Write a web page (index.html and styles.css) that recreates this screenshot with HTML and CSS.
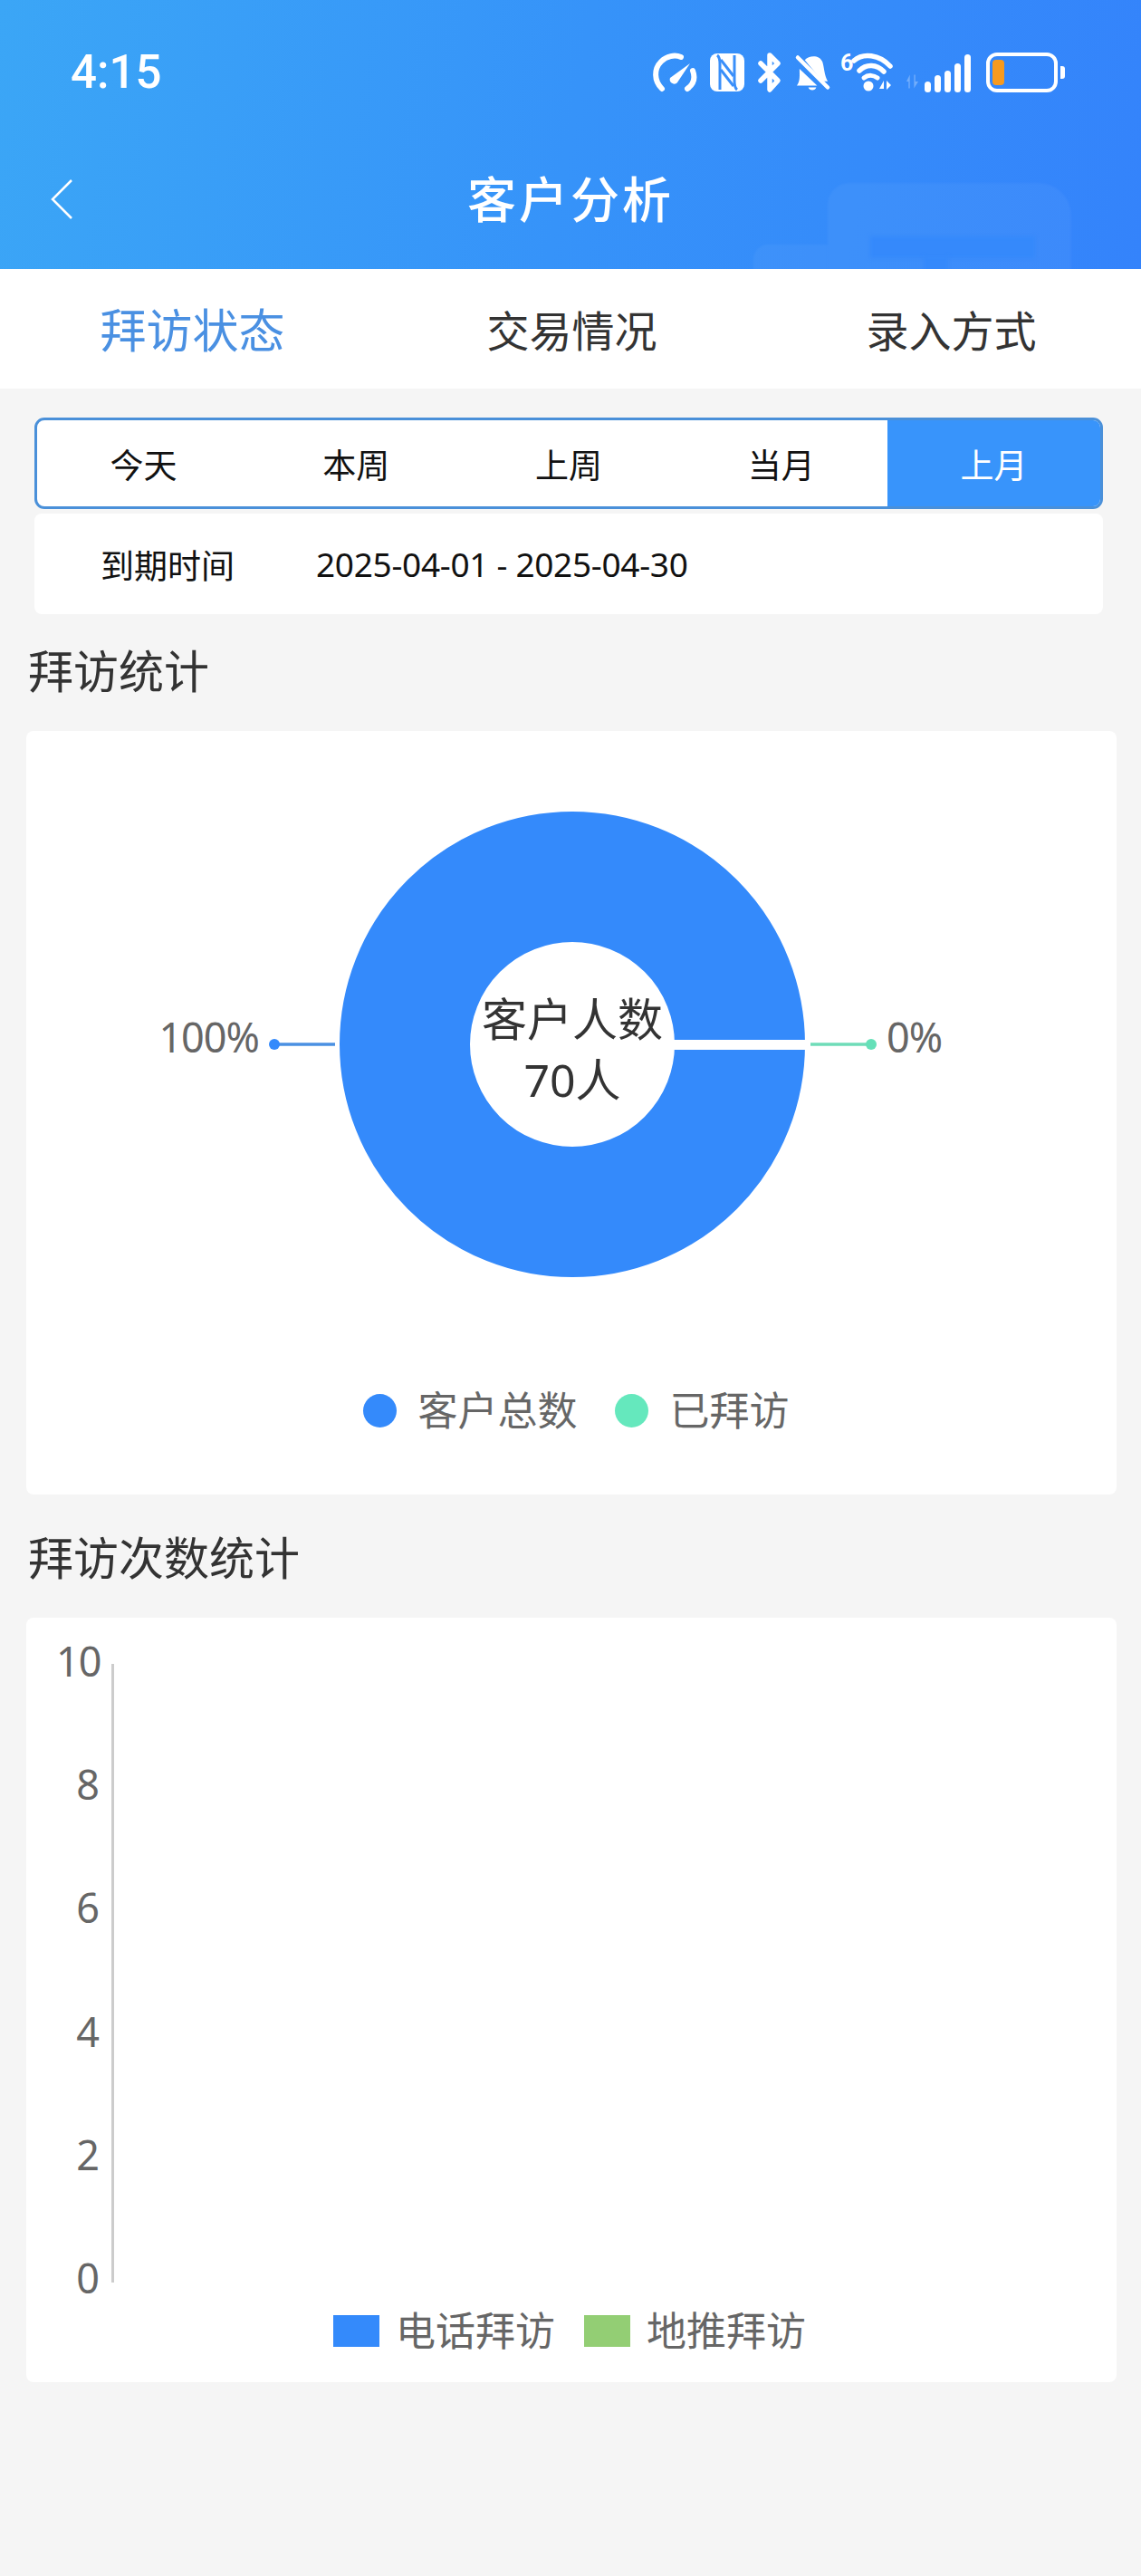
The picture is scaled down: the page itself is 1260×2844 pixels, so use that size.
FILE: index.html
```html
<!DOCTYPE html>
<html lang="zh-CN">
<head>
  <meta charset="UTF-8" />
  <meta name="viewport" content="width=device-width, initial-scale=1.0"/>
  <title>客户分析</title>
  <link rel="stylesheet" href="styles.css">
</head>
<body>
  <header class="top">
    <div class="deco deco-a"></div>
    <div class="deco deco-b"></div>
    <div class="deco-cut deco-cut-a"></div>
    <div class="deco-cut deco-cut-b"></div>

    <div class="status">
      <span class="time">4:15</span>
      <div class="status-icons">
        <svg class="ic" width="48" height="44" viewBox="0 0 48 44">
          <path d="M10 40 C1 31 1 18 9 10 C15 4 24 2 31 5" fill="none" stroke="#fff" stroke-width="6" stroke-linecap="round"/>
          <path d="M44 20 C47 28 45 35 38 40" fill="none" stroke="#fff" stroke-width="6" stroke-linecap="round"/>
          <path d="M41 12 L27 33 C24 37 17 33 19 28 Z" fill="#fff"/>
        </svg>
        <svg class="ic" width="38" height="42" viewBox="0 0 38 42">
          <rect width="38" height="42" rx="8" fill="#fff"/>
          <path d="M8 2 C11 4 11 8 11 12 V40 M30 40 C27 38 27 34 27 30 V2" fill="none" stroke="#3a8ffa" stroke-width="3"/>
          <path d="M12 7 L26 25 M12 18 L26 36" stroke="#3a8ffa" stroke-width="3" fill="none"/>
        </svg>
        <svg class="ic" width="27" height="44" viewBox="0 0 27 44">
          <path d="M3 12 L22 31 L13 41 V3 L22 12 L3 31" fill="none" stroke="#fff" stroke-width="5.5" stroke-linecap="round" stroke-linejoin="round"/>
        </svg>
        <svg class="ic ic-bell" width="37" height="42" viewBox="0 0 38 42">
          <path d="M10 7 C15 1 27 1 30 9 C32 15 32 24 36 31 L30 31 Z M4 17 L24 36 H1 C5 31 4 24 4 17 Z M14 38 H23 C22 42 15 42 14 38 Z" fill="#fff"/>
          <path d="M2 4 L36 38" stroke="#fff" stroke-width="4.5" stroke-linecap="round"/>
        </svg>
        <svg class="ic ic-wifi" width="56" height="44" viewBox="0 0 56 44">
          <text x="-1" y="20" class="wifi-six">6</text>
          <path d="M14 9 C24 0 42 2 54 15" fill="none" stroke="#fff" stroke-width="5.5" stroke-linecap="round"/>
          <path d="M20 20 C28 12 39 13 47 21" fill="none" stroke="#fff" stroke-width="5.5" stroke-linecap="round"/>
          <path d="M25 28 C30 24 36 25 40 28" fill="none" stroke="#fff" stroke-width="5" stroke-linecap="round"/>
          <circle cx="30" cy="37" r="5.5" fill="#fff"/>
          <path d="M42 40 H47 V31 Z M50 31 V41 L55 36 Z" fill="#fff"/>
        </svg>
        <svg class="ic ic-arrows" width="13" height="16" viewBox="0 0 14 16">
          <path d="M0 8 L4 0 V16 H2.5 V8 Z M9 0 H10.5 V8 H14 L9 16 Z" fill="#fff" opacity="0.3"/>
        </svg>
        <div class="bars">
          <i style="height:12px"></i><i style="height:19px"></i><i style="height:24px"></i><i style="height:32px"></i><i style="height:42px"></i>
        </div>
        <div class="battery">
          <div class="battery-body"><div class="battery-fill"></div></div>
          <div class="battery-tip"></div>
        </div>
      </div>
    </div>

    <div class="nav">
      <svg class="back" width="26" height="46" viewBox="0 0 26 46">
        <path d="M24 2 L3 23 L24 44" fill="none" stroke="#fff" stroke-width="2.5"/>
      </svg>
      <h1>客户分析</h1>
    </div>
  </header>

  <div class="tabs">
    <div class="tab active">拜访状态</div>
    <div class="tab">交易情况</div>
    <div class="tab">录入方式</div>
  </div>

  <div class="range">
    <div class="seg">
      <div class="seg-item">今天</div>
      <div class="seg-item">本周</div>
      <div class="seg-item">上周</div>
      <div class="seg-item">当月</div>
      <div class="seg-item on">上月</div>
    </div>
    <div class="date-row">
      <span class="date-label">到期时间</span>
      <span class="date-val">2025-04-01 - 2025-04-30</span>
    </div>
  </div>

  <h2 class="sec first">拜访统计</h2>
  <section class="card pie-card">
    <svg class="pie" width="1204" height="700" viewBox="0 0 1204 700">
      <circle cx="603" cy="346" r="185" fill="none" stroke="#348afb" stroke-width="144"/>
      <rect x="712" y="341" width="152" height="11" fill="#fff"/>
      <path d="M274 346 H341" stroke="#4a90e2" stroke-width="3.5"/>
      <circle cx="274" cy="346" r="6" fill="#348afb"/>
      <path d="M866 346 H933" stroke="#6fdcb8" stroke-width="3.5"/>
      <circle cx="933" cy="346" r="6" fill="#65e0b8"/>
      <text x="257" y="355" text-anchor="end" class="pie-pct">100%</text>
      <text x="950" y="355" class="pie-pct">0%</text>
      <text x="603" y="337" text-anchor="middle" class="pie-center">客户人数</text>
      <text x="603" y="404" text-anchor="middle" class="pie-center">70人</text>
    </svg>
    <div class="legend">
      <div class="legend-item"><span class="dot dot-blue"></span>客户总数</div>
      <div class="legend-item"><span class="dot dot-green"></span>已拜访</div>
    </div>
  </section>

  <h2 class="sec">拜访次数统计</h2>
  <section class="card bar-card">
    <div class="plot">
      <div class="y-labels">
        <span>10</span><span>8</span><span>6</span><span>4</span><span>2</span><span>0</span>
      </div>
      <div class="y-axis"></div>
    </div>
    <div class="bar-legend">
      <div class="bar-legend-item"><span class="swatch swatch-blue"></span>电话拜访</div>
      <div class="bar-legend-item"><span class="swatch swatch-green"></span>地推拜访</div>
    </div>
  </section>
</body>
</html>
```

FILE: styles.css
```css
* {
  box-sizing: border-box;
}

body {
  margin: 0;
  height: 2844px;
  background-color: #f5f5f5;
  font-family: "Noto Sans", "Noto Sans CJK SC", sans-serif;
  color: #333;
  overflow: hidden;
}

.top {
  position: relative;
  height: 297px;
  padding-top: 58px;
  overflow: hidden;
  background: linear-gradient(100deg, #3ba6f6 0%, #3693f9 50%, #3483fb 100%);
}

/* faint building shapes behind the title */
.deco {
  position: absolute;
  background: rgba(255, 255, 255, 0.045);
  filter: blur(1px);
}

.deco-a {
  left: 914px;
  top: 202px;
  width: 269px;
  height: 130px;
  border-radius: 24px 36px 0 0;
}

.deco-b {
  left: 832px;
  top: 270px;
  width: 82px;
  height: 60px;
  border-radius: 16px 0 0 0;
}

.deco-cut {
  position: absolute;
  background: #3589fb;
  filter: blur(2px);
}

.deco-cut-a {
  left: 961px;
  top: 261px;
  width: 182px;
  height: 24px;
}

.deco-cut-b {
  left: 1020px;
  top: 283px;
  width: 27px;
  height: 20px;
}

.status {
  position: relative;
  display: flex;
  justify-content: space-between;
  align-items: center;
  height: 44px;
  padding: 0 84px 0 78px;
  color: #fff;
}

.time {
  font-family: Roboto, sans-serif;
  font-size: 51px;
  font-weight: 500;
  line-height: 44px;
}

.status-icons {
  display: flex;
  align-items: center;
}

.ic {
  display: block;
  margin-right: 15px;
  overflow: visible;
}

.ic-bell {
  margin-right: 13px;
}

.ic-wifi {
  margin-right: 16px;
}

.ic-arrows {
  align-self: flex-end;
  margin: 0 7px 4px 0;
}

.wifi-six {
  font-family: Roboto, sans-serif;
  font-size: 25px;
  font-weight: 700;
  fill: #fff;
}

.bars {
  display: flex;
  align-items: flex-end;
  gap: 4px;
  height: 44px;
  margin-right: 17px;
}

.bars i {
  display: block;
  width: 7px;
  background: #fff;
  border-radius: 4px;
}

.battery {
  display: flex;
  align-items: center;
}

.battery-body {
  width: 79px;
  height: 44px;
  padding: 4px 3px;
  border: 4px solid #fff;
  border-radius: 12px;
}

.battery-fill {
  width: 13px;
  height: 100%;
  background: #f79a1e;
  border-radius: 4px;
}

.battery-tip {
  width: 5px;
  height: 14px;
  margin-left: 3px;
  background: #fff;
  border-radius: 0 3px 3px 0;
}

.nav {
  position: relative;
  display: flex;
  justify-content: center;
  align-items: center;
  height: 60px;
  margin-top: 88px;
}

.nav h1 {
  margin: 0;
  font-size: 54px;
  font-weight: 500;
  letter-spacing: 3px;
  line-height: 60px;
  color: #fff;
}

.back {
  position: absolute;
  left: 55px;
  top: 7px;
}

.tabs {
  display: flex;
  height: 132px;
  padding: 0 0 2px 3px;
  background: #fff;
}

.tab {
  flex: 1;
  display: flex;
  justify-content: center;
  align-items: center;
  font-size: 47px;
  color: #333;
}

.tab.active {
  font-size: 51px;
  color: #4a90e2;
}

.range {
  margin: 32px 42px 0 38px;
}

.seg {
  display: flex;
  height: 101px;
  background: #fff;
  border: 3px solid #4a90d9;
  border-radius: 11px;
  overflow: hidden;
}

.seg-item {
  flex: 1;
  display: flex;
  justify-content: center;
  align-items: center;
  font-size: 37px;
  color: #111;
}

.seg-item.on {
  background: #3894fb;
  color: #fff;
}

.date-row {
  display: flex;
  align-items: center;
  height: 111px;
  margin-top: 5px;
  padding-left: 73px;
  background: #fff;
  border-radius: 8px;
  font-size: 37px;
  color: #111;
}

.date-val {
  margin-left: 90px;
  letter-spacing: -0.3px;
}

.sec {
  margin: 35px 0 31px 31px;
  font-size: 50px;
  font-weight: 400;
  line-height: 70px;
  color: #333;
}

.sec.first {
  margin-top: 28px;
  margin-bottom: 31px;
}

.card {
  margin: 0 27px 0 29px;
  background: #fff;
  border-radius: 8px;
}

.pie-card {
  height: 843px;
}

.pie {
  display: block;
}

.pie-pct {
  font-size: 45px;
  letter-spacing: -1px;
  fill: #666;
}

.pie-center {
  font-size: 50px;
  fill: #333;
}

.legend {
  display: flex;
  justify-content: center;
  gap: 41px;
  margin-top: 20px;
  padding-left: 10px;
}

.legend-item {
  display: flex;
  align-items: center;
  font-size: 44px;
  line-height: 60px;
  color: #666;
}

.dot {
  width: 37px;
  height: 37px;
  margin-right: 24px;
  border-radius: 50%;
}

.dot-blue { background: #348afb; }
.dot-green { background: #65e8bd; }

.bar-card {
  height: 844px;
  padding-top: 23px;
}

.plot {
  display: flex;
  height: 731px;
  margin-left: 33px;
}

.y-labels {
  display: flex;
  flex-direction: column;
  justify-content: space-between;
  width: 47px;
  text-align: right;
  font-size: 45px;
  letter-spacing: -1px;
  line-height: 50px;
  color: #666;
}

.y-axis {
  width: 3px;
  height: 683px;
  margin: 28px 0 0 14px;
  background: #ccc;
}

.bar-legend {
  display: flex;
  justify-content: center;
  gap: 32px;
  margin-top: 8px;
  padding-right: 4px;
}

.bar-legend-item {
  display: flex;
  align-items: center;
  font-size: 44px;
  line-height: 50px;
  color: #666;
}

.swatch {
  width: 51px;
  height: 35px;
  margin-right: 18px;
}

.swatch-blue { background: #348afb; }
.swatch-green { background: #93ce74; }
```
